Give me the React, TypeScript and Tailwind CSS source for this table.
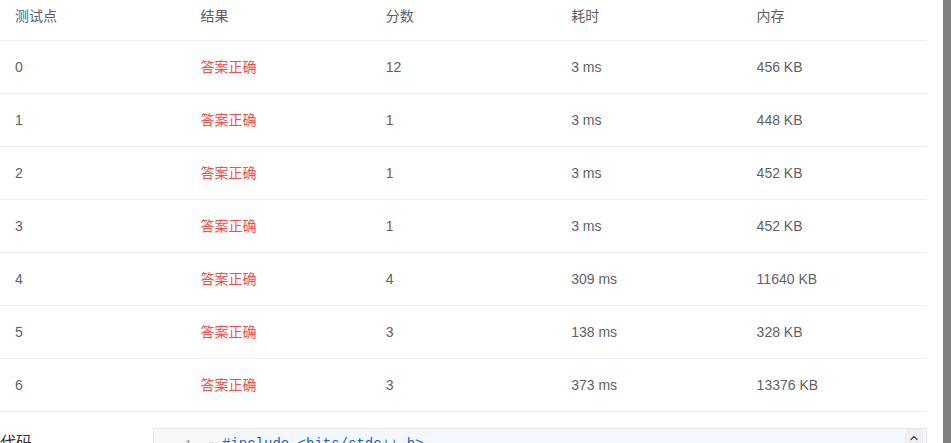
import { ChevronUp } from 'lucide-react';

const rows = [
  { id: 0, score: 12, time: '3 ms', mem: '456 KB' },
  { id: 1, score: 1, time: '3 ms', mem: '448 KB' },
  { id: 2, score: 1, time: '3 ms', mem: '452 KB' },
  { id: 3, score: 1, time: '3 ms', mem: '452 KB' },
  { id: 4, score: 4, time: '309 ms', mem: '11640 KB' },
  { id: 5, score: 3, time: '138 ms', mem: '328 KB' },
  { id: 6, score: 3, time: '373 ms', mem: '13376 KB' },
];

const headers = ['测试点', '结果', '分数', '耗时', '内存'];

export default function App() {
  return (
    <div
      className="flex h-[443px] w-[951px] overflow-hidden bg-white text-[14px] text-[#606266]"
      style={{ fontFamily: '"Liberation Sans", "Noto Sans CJK SC", sans-serif' }}
    >
      <div className="w-[943px] shrink-0">
        <div className="w-[927px]">
          {/* header */}
          <div className="grid h-[41px] grid-cols-5 border-b border-[#ebeef5] pb-[7px]">
            {headers.map((h) => (
              <div key={h} className="flex items-center pl-[15px] text-[#606266]">
                {h}
              </div>
            ))}
          </div>
          {rows.map((r) => (
            <div key={r.id} className="grid h-[53px] grid-cols-5 border-b border-[#ebeef5]">
              <div className="flex items-center pl-[15px]">{r.id}</div>
              <div className="flex items-center pl-[15px] text-[#ff4949]">答案正确</div>
              <div className="flex items-center pl-[15px]">{r.score}</div>
              <div className="flex items-center pl-[15px]">{r.time}</div>
              <div className="flex items-center pl-[15px]">{r.mem}</div>
            </div>
          ))}
        </div>

        {/* code section */}
        <div className="flex w-[927px] pt-[16px]">
          <div className="w-[153px] shrink-0 pt-[3px] text-[16px] text-[#303133]">代码</div>
          <div className="flex h-[60px] flex-1 border border-[#e6e6e6] bg-[#fafafa]">
            <div className="flex w-[66px] shrink-0 items-start bg-[#f7f7f7] pt-[6px] text-[13px] text-[#999]">
              <span className="w-[38px] text-right">1</span>
              <span className="ml-[15px] text-[9px] leading-[20px]">▼</span>
            </div>
            <div className="relative flex-1 bg-[#f3f8ff] pl-[2px] pt-[4px]">
              <span
                className="text-[14px] text-[#1a5fd0]"
                style={{ fontFamily: '"Liberation Mono", monospace' }}
              >
                #include &lt;bits/stdc++.h&gt;
              </span>
              <div className="absolute right-[3px] top-0 flex h-[18px] w-[18px] items-center justify-center bg-[#f0f0f0]">
                <ChevronUp className="h-3 w-3 text-[#505050]" strokeWidth={3} />
              </div>
            </div>
          </div>
        </div>
      </div>
      <div className="w-[8px] shrink-0 bg-[#808080]" />
    </div>
  );
}
